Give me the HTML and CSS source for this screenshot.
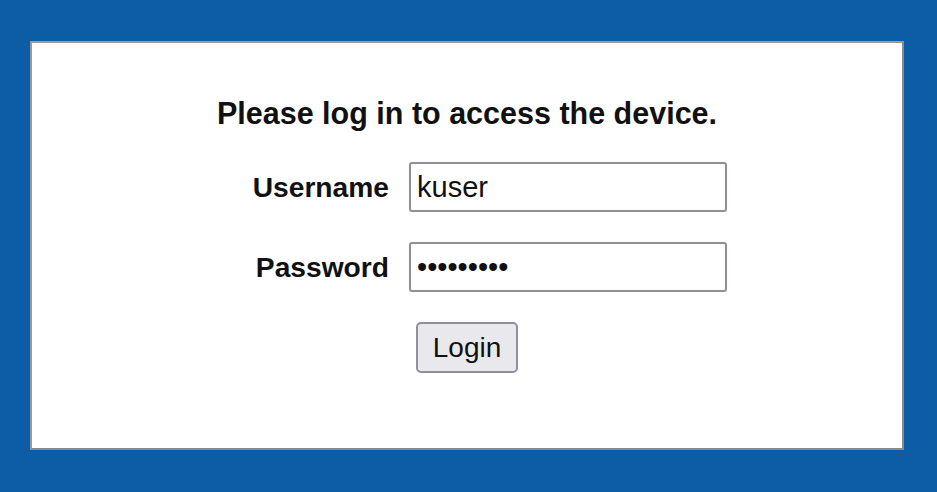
FILE: index.html
```html
<!DOCTYPE html>
<html lang="en">
  <head>
    <meta charset="UTF-8" />
    <meta name="viewport" content="width=device-width, initial-scale=1.0" />
    <title>Device Login</title>
    <link rel="stylesheet" href="styles.css">
  </head>
  <body>
    <!-- Login Panel -->
    <div class="panel">
      <h1 class="title">Please log in to access the device.</h1>

      <form class="login-form" onsubmit="return false;">
        <div class="fields">
          <label for="username">Username</label>
          <input type="text" id="username" value="kuser" />

          <label for="password">Password</label>
          <input type="password" id="password" value="kuser1234" />
        </div>

        <div class="actions">
          <button type="submit">Login</button>
        </div>
      </form>
    </div>
  </body>
</html>
```

FILE: styles.css
```css
/* Global Reset */
* {
  margin: 0;
  padding: 0;
  box-sizing: border-box;
}

body {
  font-family: "Liberation Sans", Arial, sans-serif;
  background-color: #0c5da5;
  color: #111;
  padding: 41px 33px 42px 30px;
  height: 100vh;
}

/* Panel */
.panel {
  height: 100%;
  background-color: #fff;
  border: 2px solid #9a9a9a;
  border-right-color: #8a8a8a;
  border-bottom-color: #8a8a8a;
  padding-top: 52px;
}

.title {
  font-size: 30.5px;
  font-weight: bold;
  text-align: center;
  line-height: 36px;
  margin-bottom: 31px;
}

/* Form */
.fields {
  display: grid;
  grid-template-columns: 158px 318px;
  column-gap: 20px;
  row-gap: 30px;
  align-items: center;
  margin-left: 199px;
}

.fields label {
  font-size: 28.2px;
  font-weight: bold;
  text-align: right;
}

.fields input {
  height: 50px;
  padding: 0 6px;
  border: 2px solid #8f8f9d;
  border-radius: 3px;
  font-family: "Liberation Sans", Arial, sans-serif;
  font-size: 29px;
  color: #111;
  background-color: #fff;
}

.actions {
  display: flex;
  justify-content: center;
  margin-top: 30px;
}

.actions button {
  width: 102px;
  height: 51px;
  background-color: #e9e9ed;
  border: 2px solid #8f8f9d;
  border-radius: 5px;
  font-family: "Liberation Sans", Arial, sans-serif;
  font-size: 28px;
  color: #111;
  cursor: pointer;
}
```
